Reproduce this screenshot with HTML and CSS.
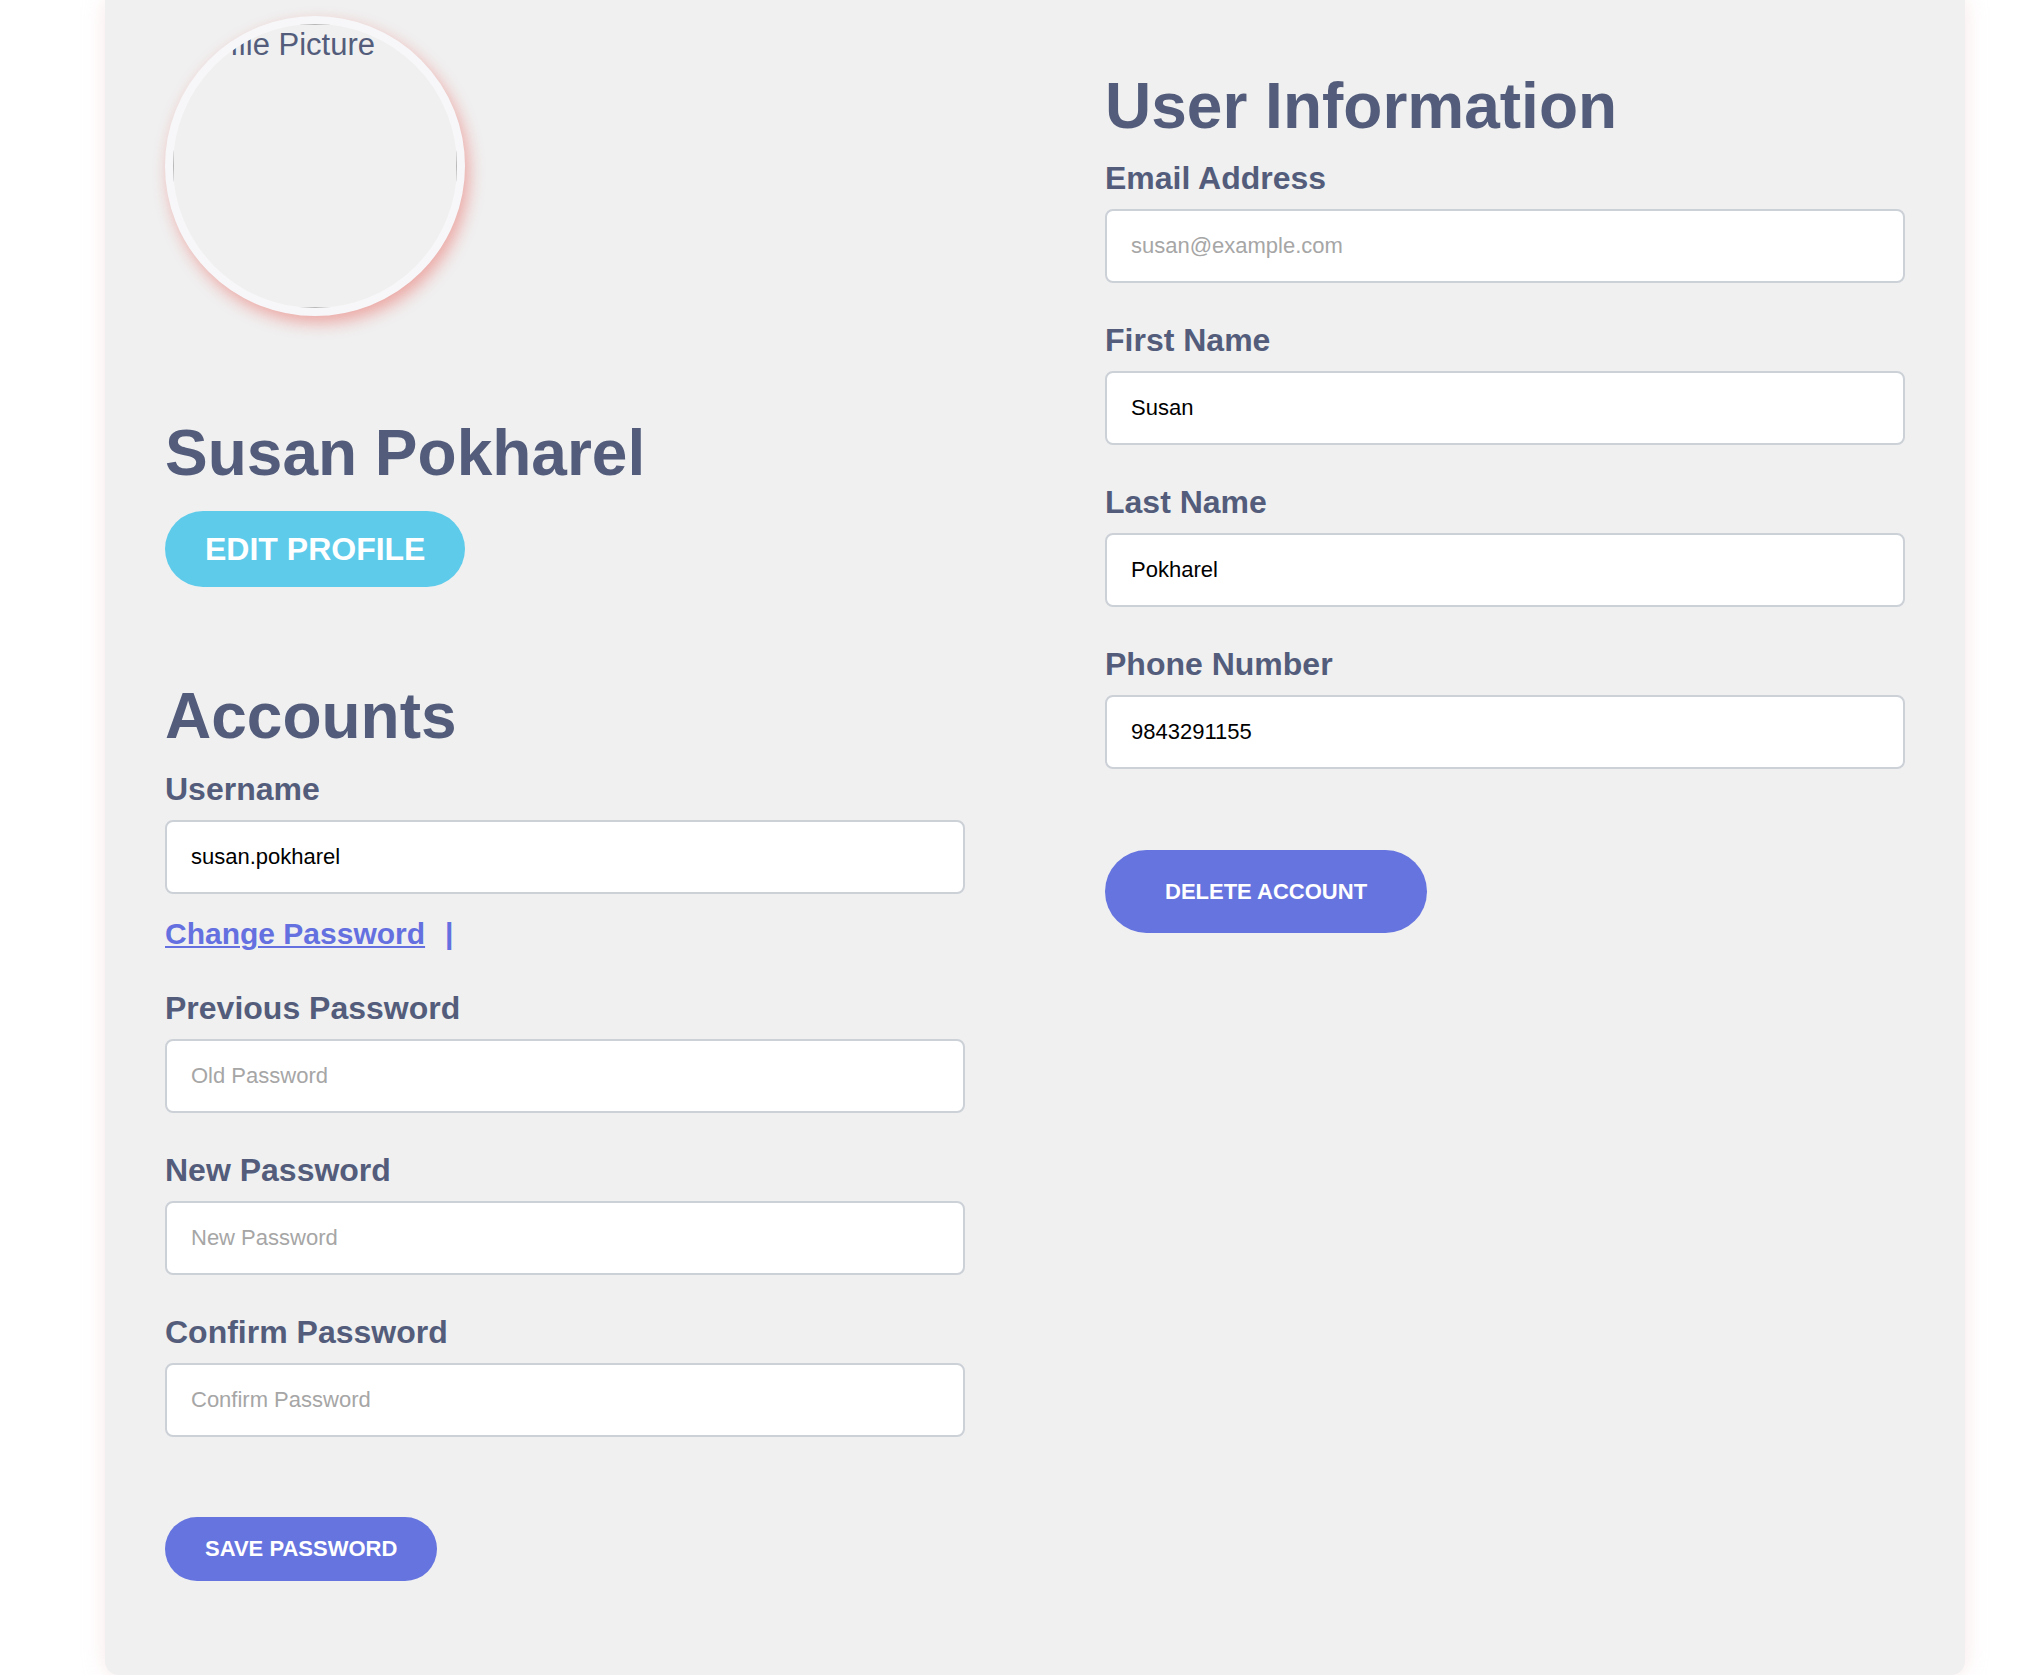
FILE: index.html
```html
<!DOCTYPE html>
<html lang="en">
<head>
<meta charset="utf-8">
<title>Profile</title>
<link rel="stylesheet" href="styles.css">
</head>
<body>
<main class="card">
  <section class="col col-left">
    <div class="avatar">
      <div class="avatar-img"><span class="avatar-alt">Profile Picture</span></div>
    </div>
    <h1 class="name">Susan Pokharel</h1>
    <button class="btn btn-edit" type="button">Edit Profile</button>

    <h2 class="section-title section-accounts">Accounts</h2>
    <div class="field field-first">
      <label class="field-label">Username</label>
      <input class="field-input" type="text" value="susan.pokharel">
    </div>
    <div class="pw-toggle"><a class="pw-link" href="#">Change Password</a><span class="pw-sep">|</span></div>
    <div class="field">
      <label class="field-label">Previous Password</label>
      <input class="field-input" type="password" placeholder="Old Password">
    </div>
    <div class="field">
      <label class="field-label">New Password</label>
      <input class="field-input" type="password" placeholder="New Password">
    </div>
    <div class="field">
      <label class="field-label">Confirm Password</label>
      <input class="field-input" type="password" placeholder="Confirm Password">
    </div>
    <button class="btn btn-primary btn-save" type="button">Save Password</button>
  </section>

  <section class="col col-right">
    <h2 class="section-title section-info">User Information</h2>
    <div class="field field-first field-first-right">
      <label class="field-label">Email Address</label>
      <input class="field-input" type="email" placeholder="susan@example.com">
    </div>
    <div class="field">
      <label class="field-label">First Name</label>
      <input class="field-input" type="text" value="Susan">
    </div>
    <div class="field">
      <label class="field-label">Last Name</label>
      <input class="field-input" type="text" value="Pokharel">
    </div>
    <div class="field">
      <label class="field-label">Phone Number</label>
      <input class="field-input" type="tel" value="9843291155">
    </div>
    <button class="btn btn-primary btn-delete" type="button">Delete Account</button>
  </section>
</main>
</body>
</html>
```

FILE: styles.css
```css
* {
  box-sizing: border-box;
}

html, body {
  margin: 0;
  padding: 0;
  background: #ffffff;
}

body {
  font-family: "Liberation Sans", Arial, Helvetica, sans-serif;
  color: #535d7b;
}

.card {
  width: 1860px;
  margin-left: 105px;
  padding: 16px 60px 94px;
  background: #f0f0f0;
  border-radius: 0 0 14px 14px;
  box-shadow: 0 0 22px rgba(235, 190, 190, 0.35);
  display: grid;
  grid-template-columns: 800px 800px;
  column-gap: 140px;
  align-items: start;
}

.col {
  display: flex;
  flex-direction: column;
  align-items: flex-start;
}

/* avatar */
.avatar {
  width: 300px;
  height: 300px;
  border-radius: 50%;
  border: 8px solid #f7f7f9;
  background: #f0f0f0;
  overflow: hidden;
  box-shadow: 4px 7px 16px rgba(230, 80, 70, 0.45);
}

.avatar-img {
  width: 284px;
  height: 284px;
  border: 1px solid #b8b8b8;
  padding: 2px 0 0 8px;
}

.avatar-alt {
  display: block;
  font-size: 31px;
  line-height: 35px;
  white-space: nowrap;
  color: #535d7b;
}

/* name + edit */
.name {
  margin: 100px 0 0;
  font-size: 64px;
  line-height: 74px;
  font-weight: 700;
}

.btn {
  display: inline-flex;
  align-items: center;
  justify-content: center;
  border: none;
  border-radius: 999px;
  color: #ffffff;
  font-family: inherit;
  font-weight: 700;
  text-transform: uppercase;
  cursor: pointer;
  white-space: nowrap;
}

.btn-edit {
  margin-top: 21px;
  height: 76px;
  padding: 0 40px;
  font-size: 32px;
  background: #5ecbeb;
}

.btn-primary {
  background: #6574df;
  font-size: 22px;
}

.btn-save {
  margin-top: 80px;
  height: 64px;
  padding: 0 40px;
}

.btn-delete {
  margin-top: 81px;
  height: 83px;
  padding: 0 60px;
}

/* sections */
.section-title {
  margin: 0;
  font-size: 64px;
  line-height: 74px;
  font-weight: 700;
}

.section-accounts {
  margin-top: 92px;
}

.section-info {
  margin-top: 53px;
}

/* fields */
.field {
  width: 100%;
  display: flex;
  flex-direction: column;
  margin-top: 39px;
}

.field-first {
  margin-top: 18px;
}

.field-first-right {
  margin-top: 17px;
}

.field-label {
  font-size: 32px;
  line-height: 37px;
  font-weight: 700;
  color: #535d7b;
  margin-bottom: 12px;
}

.field-input {
  width: 100%;
  height: 74px;
  padding: 0 24px;
  border: 2px solid #ccd0d7;
  border-radius: 8px;
  background: #ffffff;
  font-family: inherit;
  font-size: 22px;
  color: #000000;
  outline: none;
}

.field-input::placeholder {
  color: #a6a6a6;
}

/* change password toggle */
.pw-toggle {
  margin-top: 22px;
  display: flex;
  align-items: baseline;
  font-size: 30px;
  line-height: 35px;
  font-weight: 700;
  color: #6470e0;
}

.pw-link {
  color: #6470e0;
  text-decoration: underline;
  text-decoration-thickness: 2px;
  text-underline-offset: 2px;
}

.pw-sep {
  margin-left: 20px;
}
```
